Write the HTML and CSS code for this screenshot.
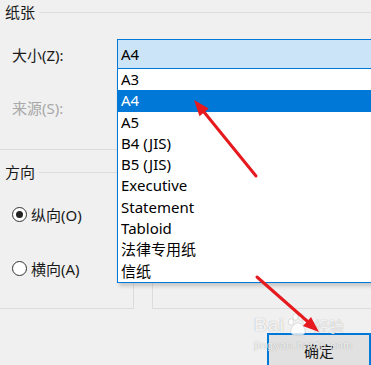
FILE: index.html
```html
<!DOCTYPE html>
<html lang="zh-CN">
<head>
    <meta charset="UTF-8">
    <title>页面设置</title>
    <link rel="stylesheet" href="styles.css">
</head>
<body>
    <div class="dialog">
        <section class="group paper">
            <div class="legend">纸张</div>
            <div class="field">
                <span class="field-label">大小(Z):</span>
                <div class="combo">
                    <div class="combo-value">A4</div>
                    <ul class="dropdown">
                        <li>A3</li>
                        <li class="selected">A4</li>
                        <li>A5</li>
                        <li>B4 (JIS)</li>
                        <li>B5 (JIS)</li>
                        <li>Executive</li>
                        <li>Statement</li>
                        <li>Tabloid</li>
                        <li>法律专用纸</li>
                        <li>信纸</li>
                    </ul>
                </div>
            </div>
            <div class="field disabled">
                <span class="field-label">来源(S):</span>
            </div>
        </section>

        <div class="middle">
            <section class="group orient">
                <div class="legend">方向</div>
                <label class="radio first"><span class="radio-dot checked"></span>纵向(O)</label>
                <label class="radio second"><span class="radio-dot"></span>横向(A)</label>
            </section>
            <section class="group preview"></section>
        </div>

        <div class="footer">
            <button class="btn" type="button">确定</button>
        </div>

        <!-- annotation arrows -->
        <svg class="annot" width="371" height="365" viewBox="0 0 371 365">
            <line x1="256" y1="176" x2="204" y2="112" stroke="#e5191e" stroke-width="3" stroke-linecap="round"/>
            <polygon points="194,100 208.8,108.6 199.5,116.2" fill="#e5191e"/>
            <line x1="257" y1="277" x2="307" y2="321" stroke="#e5191e" stroke-width="3" stroke-linecap="round"/>
            <polygon points="319,332 303,325.9 311,316.9" fill="#e5191e"/>
        </svg>

        <div class="watermark">
            <div class="wm-top">
                <span class="wm-bai">Bai</span>
                <svg class="wm-paw" width="24" height="24" viewBox="0 0 24 24">
                    <ellipse cx="5" cy="9" rx="2.6" ry="3.2"/>
                    <ellipse cx="9.5" cy="4" rx="2.6" ry="3.2"/>
                    <ellipse cx="15" cy="4" rx="2.6" ry="3.2"/>
                    <ellipse cx="19.5" cy="9" rx="2.6" ry="3.2"/>
                    <path d="M12 10 C8 10 4 16 5 20 C6 23 10 22 12 22 C14 22 18 23 19 20 C20 16 16 10 12 10 Z"/>
                </svg>
                <span class="wm-jy">经验</span>
            </div>
            <div class="wm-url">jingyan.baidu.com</div>
        </div>
    </div>
</body>
</html>
```

FILE: styles.css
```css
body { margin: 0; background-color: #f0f0f0; font-family: "Noto Sans", "Noto Sans CJK SC", sans-serif; font-size: 15px; color: #1a1a1a; }
.dialog { position: relative; width: 371px; height: 365px; overflow: hidden; }

.legend { display: flex; align-items: center; gap: 4px; height: 25px; line-height: 25px; padding-left: 5px; }
.legend::after { content: ""; flex: 1; border-top: 1px solid #dcdcdc; }

.paper { border-bottom: 1px solid #dcdcdc; padding-bottom: 27px; }
.field { display: flex; align-items: center; height: 30px; margin-top: 14px; }
.field.disabled { margin-top: 23px; color: #a8a8a8; }
.field-label { flex-shrink: 0; width: 105px; padding-left: 12px; }

.combo { position: relative; flex-shrink: 0; width: 280px; height: 30px; box-sizing: border-box; border: 1px solid #0078d7; background-color: #cce4f7; }
.combo-value { line-height: 28px; padding-left: 3px; color: #000; }
.dropdown { position: absolute; top: 29px; left: -1px; z-index: 10; width: 280px; margin: 0; padding: 0; list-style: none; background-color: #fff; border-left: 1px solid #0078d7; border-bottom: 1px solid #0078d7; box-shadow: 2px 3px 4px rgba(0,0,0,0.18); }
.dropdown li { height: 21.3px; line-height: 21.3px; padding-left: 3px; color: #000; }
.dropdown li.selected { background-color: #0078d7; color: #fff; }

.middle { display: flex; height: 149px; margin-top: 10px; }
.orient { flex-shrink: 0; width: 134px; box-sizing: border-box; border-right: 1px solid #dcdcdc; border-bottom: 1px solid #dcdcdc; }
.preview { flex: 1; margin-left: 18px; margin-right: -10px; border-left: 1px solid #dcdcdc; border-bottom: 1px solid #dcdcdc; }

.radio { display: flex; align-items: center; gap: 4px; height: 22px; padding-left: 12px; }
.radio.first { margin-top: 18px; }
.radio.second { margin-top: 32px; }
.radio-dot { position: relative; width: 15px; height: 15px; box-sizing: border-box; border: 1px solid #333; border-radius: 50%; background-color: #fff; }
.radio-dot.checked::after { content: ""; position: absolute; left: 3px; top: 3px; width: 7px; height: 7px; border-radius: 50%; background-color: #222; }

.footer { padding: 24px 0 0 267px; }
.btn { width: 104px; height: 34px; border: 2px solid #0078d7; background-color: #e1e1e1; font-family: inherit; font-size: 15px; color: #1a1a1a; padding: 0; }

.annot { position: absolute; left: 0; top: 0; z-index: 20; pointer-events: none; }

.watermark { position: absolute; left: 254px; top: 312px; z-index: 15; color: rgba(255,255,255,0.85); text-shadow: 0 0 1px rgba(0,0,0,0.35); pointer-events: none; }
.wm-top { display: flex; align-items: center; gap: 1px; height: 26px; }
.wm-bai { font-family: "Liberation Sans", sans-serif; font-weight: bold; font-size: 18px; letter-spacing: 1px; }
.wm-paw { fill: rgba(255,255,255,0.8); stroke: rgba(0,0,0,0.2); stroke-width: 0.5; }
.wm-jy { font-size: 15px; margin-left: 3px; }
.wm-url { font-family: "Liberation Sans", sans-serif; font-size: 11px; letter-spacing: 0.6px; margin-top: 1px; }
```
